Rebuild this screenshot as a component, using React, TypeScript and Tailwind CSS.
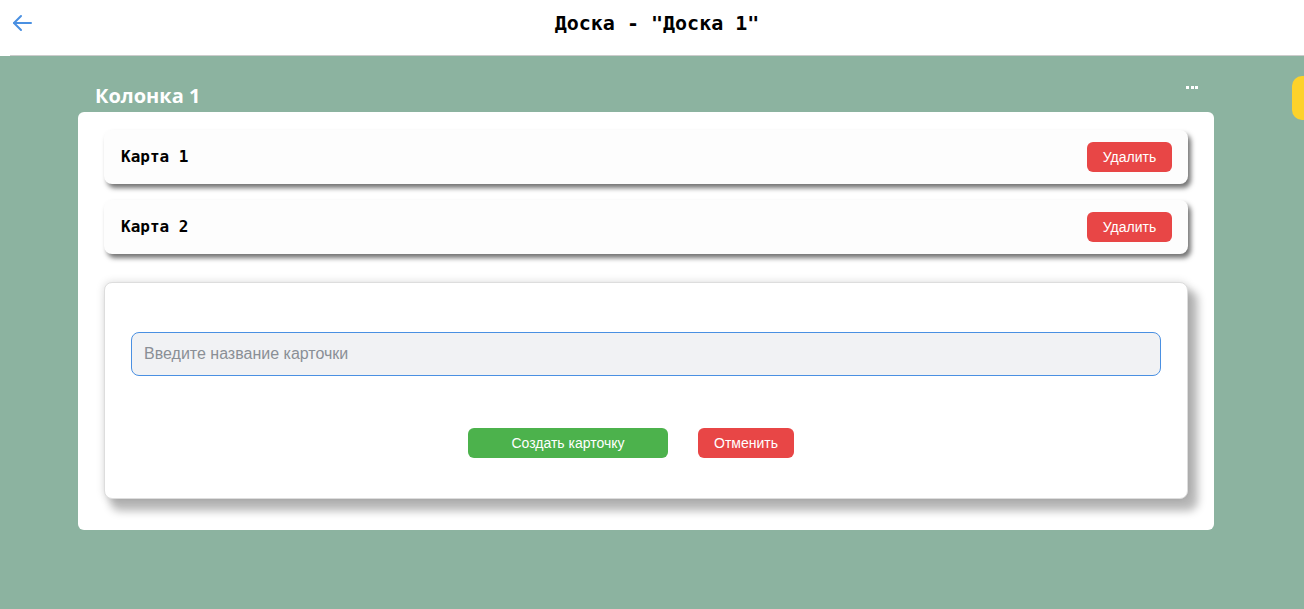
import React from "react";

function BackArrow() {
  return (
    <svg width="20" height="18" viewBox="0 0 20 18" fill="none" stroke="#4a90e2" strokeWidth="2" strokeLinecap="round" strokeLinejoin="round">
      <path d="M19 9H2" />
      <path d="M9 2L2 9l7 7" />
    </svg>
  );
}

function Card({ title }: { title: string }) {
  return (
    <div className="h-[54px] bg-[#fdfdfd] rounded-[8px] shadow-[3px_4px_5px_rgba(0,0,0,0.55)] flex items-center justify-between pl-[17px] pr-[16px]">
      <span className="font-['DejaVu_Sans_Mono',monospace] font-bold text-[16px] text-black">{title}</span>
      <button className="w-[85px] h-[30px] rounded-[6px] bg-[#e84646] text-white text-[14px] font-['Liberation_Sans',Arial,sans-serif]">
        Удалить
      </button>
    </div>
  );
}

export default function App() {
  return (
    <div className="w-full h-screen overflow-hidden bg-[#8cb3a0] font-['Liberation_Sans',Arial,sans-serif]">
      {/* Header */}
      <header className="bg-white">
        <div className="ml-[10px] h-[56px] border-b border-[#cccccc] relative flex justify-center pt-[9px]">
          <button className="absolute left-[2px] top-[14px]">
            <BackArrow />
          </button>
          <h1 className="font-['DejaVu_Sans_Mono',monospace] font-bold text-[20px] leading-[28px] text-black">
            Доска - "Доска 1"
          </h1>
        </div>
      </header>

      {/* Columns */}
      <div className="flex gap-[78px] pl-[78px] pt-[20px]">
        <div className="w-[1136px] shrink-0">
          <div className="h-[36px] flex justify-between pl-[17px] pr-[16px]">
            <h2 className="font-['Open_Sans',sans-serif] font-bold text-[20px] leading-[36px] text-white pt-[2px]">Колонка 1</h2>
            <div className="flex gap-[1.5px] mt-[10px] h-[3px]">
              <span className="w-[3px] h-[3px] bg-white" />
              <span className="w-[3px] h-[3px] bg-white" />
              <span className="w-[3px] h-[3px] bg-white" />
            </div>
          </div>

          <div className="bg-white rounded-[6px] px-[26px] pt-[18px] pb-[31px]">
            <div className="flex flex-col gap-[16px]">
              <Card title="Карта 1" />
              <Card title="Карта 2" />
            </div>

            <div className="mt-[28px] h-[217px] bg-white border border-[#dddddd] rounded-[8px] shadow-[8px_10px_8px_2px_rgba(0,0,0,0.28),0_0_8px_rgba(0,0,0,0.15)] px-[26px] pt-[49px]">
              <input
                className="w-full h-[44px] bg-[#f1f2f4] border border-[#4a90e2] rounded-[8px] pl-[12px] text-[16px] text-[#333] placeholder:text-[#8a8f96] outline-none"
                placeholder="Введите название карточки"
              />
              <div className="mt-[52px] flex justify-center gap-[30px] pr-[30px]">
                <button className="w-[200px] h-[30px] rounded-[6px] bg-[#4cb24c] text-white text-[14px]">
                  Создать карточку
                </button>
                <button className="w-[96px] h-[30px] rounded-[6px] bg-[#e84646] text-white text-[14px]">
                  Отменить
                </button>
              </div>
            </div>
          </div>
        </div>

        <div className="w-[200px] h-[44px] shrink-0 rounded-[10px] bg-[#fdd22a]" />
      </div>
    </div>
  );
}
